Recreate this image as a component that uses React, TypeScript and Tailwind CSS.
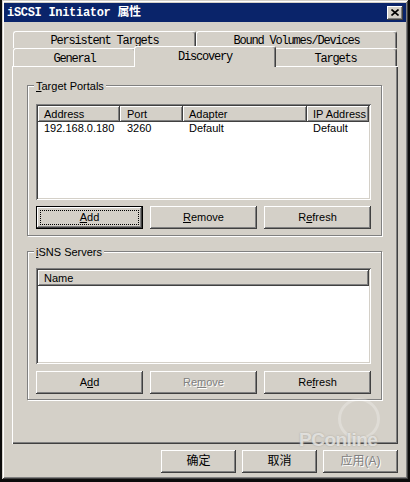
import React from "react";

const RAISED =
  "shadow-[inset_-1px_-1px_0_#404040,inset_1px_1px_0_#ffffff,inset_-2px_-2px_0_#808080]";
const SUNKEN =
  "shadow-[inset_1px_1px_0_#808080,inset_-1px_-1px_0_#ffffff,inset_2px_2px_0_#404040,inset_-2px_-2px_0_#d4d0c8]";
const HEADER =
  "shadow-[inset_-1px_-1px_0_#404040,inset_1px_1px_0_#ffffff,inset_-2px_-2px_0_#808080]";
const DISABLED = "text-[#808080] [text-shadow:1px_1px_0_#ffffff]";

function Btn({
  className = "",
  children,
  isDefault = false,
}: {
  className?: string;
  children: React.ReactNode;
  isDefault?: boolean;
}) {
  if (isDefault) {
    return (
      <div
        className={`border border-black bg-[#d4d0c8] p-[3px] ${RAISED} ${className}`}
      >
        <div className="flex h-full w-full items-center justify-center border border-dotted border-black">
          {children}
        </div>
      </div>
    );
  }
  return (
    <div
      className={`flex items-center justify-center bg-[#d4d0c8] ${RAISED} ${className}`}
    >
      {children}
    </div>
  );
}

function Tab({
  className = "",
  children,
}: {
  className?: string;
  children: React.ReactNode;
}) {
  return (
    <div
      className={`flex h-full items-center justify-center rounded-t-[3px] border-l border-t border-white border-r border-r-[#404040] bg-[#d4d0c8] shadow-[inset_-1px_0_0_#808080] font-['Liberation_Mono',monospace] text-[12px] tracking-[-1.2px] leading-none ${className}`}
    >
      {children}
    </div>
  );
}

function U({ children }: { children: React.ReactNode }) {
  return <span className="underline underline-offset-[1px]">{children}</span>;
}

export default function App() {
  return (
    <div className="relative h-[482px] w-[410px] overflow-hidden bg-[#0c0c0c] font-['Liberation_Sans','Noto_Sans_CJK_SC',sans-serif] text-[11px] leading-[13px] text-black">
      {/* window */}
      <div className="ml-[2px] flex h-[479px] w-[406px] flex-col bg-[#d4d0c8] px-[2px] pt-[3px] shadow-[inset_1px_1px_0_#d4d0c8,inset_-1px_-1px_0_#404040,inset_2px_2px_0_#ffffff,inset_-2px_-2px_0_#808080]">
        {/* title bar */}
        <div className="flex h-[19px] items-center justify-between bg-[#0a246a] pl-[3px] pr-[3px]">
          <span className="font-['Liberation_Mono','Noto_Sans_CJK_SC',monospace] text-[12px] font-bold leading-none tracking-[-0.3px] text-white">
            iSCSI Initiator 属性
          </span>
          <div
            className={`flex h-[14px] w-[16px] items-center justify-center bg-[#d4d0c8] ${RAISED}`}
          >
            <svg width="8" height="7" viewBox="0 0 8 7" className="mb-[1px]">
              <path
                d="M0.5 0.5 L7.5 6.5 M7.5 0.5 L0.5 6.5"
                stroke="#000"
                strokeWidth="1.6"
                fill="none"
              />
            </svg>
          </div>
        </div>

        {/* tabs */}
        <div className="ml-[8px] mt-[9px] w-[386px]">
          <div className="flex h-[17px] pl-[1px]">
            <Tab className="w-[183px] pt-[1px]">Persistent Targets</Tab>
            <Tab className="w-[201px] pt-[1px]">Bound Volumes/Devices</Tab>
          </div>
          <div className="flex h-[18px] pl-[1px]">
            <Tab className="w-[123px] pt-[2px]">General</Tab>
            <div className="relative z-10 -mx-[2px] -mt-[2px] flex h-[21px] w-[142px] items-start justify-center rounded-t-[3px] border-l border-t border-white border-r border-r-[#404040] bg-[#d4d0c8] pt-[4px] shadow-[inset_-1px_0_0_#808080] font-['Liberation_Mono',monospace] text-[12px] leading-none tracking-[-1.2px]">
              Discovery
            </div>
            <Tab className="w-[123px] pt-[2px]">Targets</Tab>
          </div>

          {/* panel */}
          <div className="h-[378px] w-[386px] bg-[#d4d0c8] pl-[15px] pt-[19px] shadow-[inset_1px_1px_0_#ffffff,inset_-1px_-1px_0_#404040,inset_-2px_-2px_0_#808080]">
            {/* Target Portals */}
            <div className="relative h-[151px] w-[355px] border border-[#808080] px-[8px] pt-[18px] shadow-[inset_1px_1px_0_#ffffff,1px_1px_0_#ffffff]">
              <div className="absolute -top-[7px] left-[6px] bg-[#d4d0c8] px-[2px] leading-[14px]">
                <U>T</U>arget Portals
              </div>
              <div className={`h-[96px] w-[335px] bg-white p-[2px] ${SUNKEN}`}>
                <div className="flex h-[16px]">
                  <div className={`flex w-[82px] items-center bg-[#d4d0c8] pl-[6px] ${HEADER}`}>
                    Address
                  </div>
                  <div className={`flex w-[63px] items-center bg-[#d4d0c8] pl-[7px] ${HEADER}`}>
                    Port
                  </div>
                  <div className={`flex w-[124px] items-center bg-[#d4d0c8] pl-[6px] ${HEADER}`}>
                    Adapter
                  </div>
                  <div className={`flex w-[62px] items-center bg-[#d4d0c8] pl-[6px] ${HEADER}`}>
                    IP Address
                  </div>
                </div>
                <div className="flex h-[13px] items-center">
                  <div className="w-[82px] pl-[6px]">192.168.0.180</div>
                  <div className="w-[63px] pl-[7px]">3260</div>
                  <div className="w-[124px] pl-[6px]">Default</div>
                  <div className="w-[62px] pl-[6px]">Default</div>
                </div>
              </div>
              <div className="mt-[6px] flex gap-[7px]">
                <Btn isDefault className="h-[23px] w-[107px]">
                  <span>
                    <U>A</U>dd
                  </span>
                </Btn>
                <Btn className="h-[23px] w-[107px]">
                  <span>
                    <U>R</U>emove
                  </span>
                </Btn>
                <Btn className="h-[23px] w-[107px]">
                  <span>
                    R<U>e</U>fresh
                  </span>
                </Btn>
              </div>
            </div>

            {/* iSNS Servers */}
            <div className="relative mt-[15px] h-[149px] w-[355px] border border-[#808080] px-[8px] pt-[16px] shadow-[inset_1px_1px_0_#ffffff,1px_1px_0_#ffffff]">
              <div className="absolute -top-[7px] left-[6px] bg-[#d4d0c8] px-[2px] leading-[14px]">
                <U>i</U>SNS Servers
              </div>
              <div className={`h-[96px] w-[335px] bg-white p-[2px] ${SUNKEN}`}>
                <div className="flex h-[16px]">
                  <div className={`flex w-[331px] items-center bg-[#d4d0c8] pl-[6px] ${HEADER}`}>
                    Name
                  </div>
                </div>
              </div>
              <div className="mt-[7px] flex gap-[7px]">
                <Btn className="h-[23px] w-[107px]">
                  <span>
                    A<U>d</U>d
                  </span>
                </Btn>
                <Btn className="h-[23px] w-[107px]">
                  <span className={DISABLED}>
                    Re<U>m</U>ove
                  </span>
                </Btn>
                <Btn className="h-[23px] w-[107px]">
                  <span>
                    Re<U>f</U>resh
                  </span>
                </Btn>
              </div>
            </div>
          </div>
        </div>

        {/* bottom buttons */}
        <div className="mt-[6px] flex justify-end gap-[6px] pr-[8px] text-[12px]">
          <Btn className="h-[23px] w-[75px]">确定</Btn>
          <Btn className="h-[23px] w-[75px]">取消</Btn>
          <Btn className="h-[23px] w-[75px]">
            <span className={DISABLED}>应用(A)</span>
          </Btn>
        </div>
      </div>

      {/* watermark */}
      <div className="pointer-events-none absolute left-[338px] top-[398px] h-[42px] w-[42px] rounded-full border-[3px] border-white/25" />
      <div className="pointer-events-none absolute left-[299px] top-[430px] font-['Liberation_Sans',sans-serif] text-[19px] font-bold leading-none tracking-[-0.5px] text-white/60 [text-shadow:0_0_2px_#a8a59d]">
        PConline
      </div>
    </div>
  );
}
